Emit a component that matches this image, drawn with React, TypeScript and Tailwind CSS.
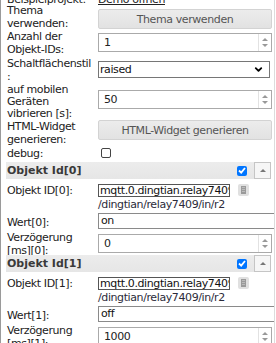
import React from 'react';
import { ChevronDown } from 'lucide-react';

const Spin: React.FC<{ value: string; className?: string }> = ({ value, className = '' }) => (
  <div className={`flex h-[19px] w-[174px] border border-[#aaa] bg-white ${className}`}>
    <span className="flex-1 pl-[5px] leading-[17px] text-[#222]">{value}</span>
    <div className="flex w-[13px] flex-col items-center justify-center gap-[3px] border-l border-[#e2e2e2]">
      <svg width="6" height="3" viewBox="0 0 6 3"><path d="M0 3 L3 0 L6 3 Z" fill="#999" /></svg>
      <svg width="6" height="3" viewBox="0 0 6 3"><path d="M0 0 L3 3 L6 0 Z" fill="#999" /></svg>
    </div>
  </div>
);

const UiButton: React.FC<{ label: string; className?: string }> = ({ label, className = '' }) => (
  <div
    className={`flex h-[20px] w-[174px] items-center justify-center rounded-[2px] border border-[#d3d3d3] bg-[linear-gradient(#ececec,#e2e2e2)] text-[#555] ${className}`}
  >
    {label}
  </div>
);

const Check: React.FC<{ checked?: boolean }> = ({ checked }) =>
  checked ? (
    <div className="flex h-[10px] w-[10px] items-center justify-center rounded-[2px] bg-[#0075ff]">
      <svg width="8" height="7" viewBox="0 0 8 7">
        <path d="M1 3.5 L3.2 5.6 L7 1" stroke="#fff" strokeWidth="1.8" fill="none" />
      </svg>
    </div>
  ) : (
    <div className="h-[10px] w-[10px] rounded-[2px] border border-[#444] bg-white" />
  );

const Header: React.FC<{ title: string }> = ({ title }) => (
  <div className="flex h-[17px] items-stretch">
    <div className="flex w-[248px] items-center justify-between bg-[linear-gradient(#ececec,#e6e6e6)] pl-[1px] pr-[7px]">
      <span className="font-bold tracking-normal text-[#3a3a3a]">{title}</span>
      <Check checked />
    </div>
    <div className="flex w-[17px] items-center justify-center border border-[#c5c5c5] bg-[#f6f6f6]">
      <svg width="6" height="3" viewBox="0 0 6 3"><path d="M0 3 L3 0 L6 3 Z" fill="#777" /></svg>
    </div>
  </div>
);

const Block: React.FC<{ i: number; value: string; delay: string }> = ({ i, value, delay }) => (
  <>
    <Header title={`Objekt Id[${i}]`} />
    <div className="flex h-[19px] items-start">
      <div className="mt-[5px] w-[92px] shrink-0 pl-[1px]">Objekt ID[{i}]:</div>
      <div className="mt-[5px] flex items-start">
        <div className="h-[13px] w-[132px] overflow-hidden whitespace-nowrap border border-[#555] bg-white pl-[1px] leading-[11px] text-[#111]">
          mqtt.0.dingtian.relay7409.in.r2
        </div>
        <div className="ml-[8px] flex h-[12px] w-[11px] items-center justify-center rounded-[2px] bg-[#e0e0e0]">
          <svg width="5" height="8" viewBox="0 0 5 8">
            <rect x="0" y="0" width="5" height="8" fill="#9a9a9a" />
            <rect x="1" y="1" width="3" height="1" fill="#bbb" />
            <rect x="1" y="3" width="3" height="1" fill="#bbb" />
            <rect x="1" y="5" width="3" height="1" fill="#bbb" />
          </svg>
        </div>
      </div>
    </div>
    <div className="flex h-[13px]">
      <div className="w-[92px] shrink-0" />
      <span className="text-[#2b2b3a]">/dingtian/relay7409/in/r2</span>
    </div>
    <div className="flex h-[18px] items-start">
      <div className="mt-[5px] w-[92px] shrink-0 pl-[1px]">Wert[{i}]:</div>
      <div className="mt-[2px] h-[16px] w-[190px] shrink-0 border border-[#8a8a8a] bg-white pl-[2px] leading-[14px] text-[#111]">
        {value}
      </div>
    </div>
    <div className="flex h-[26px] items-start">
      <div className="mt-[3px] w-[92px] shrink-0 pl-[1px] leading-[12.5px]">
        Verzögerung
        <br />
        [ms][{i}]:
      </div>
      <Spin value={delay} className="mt-[5px]" />
    </div>
  </>
);

export default function App() {
  return (
    <div className="h-[343px] w-[276px] overflow-hidden bg-white">
      <div className="-mt-[7px] h-[360px] w-[275px] overflow-hidden border-l border-r border-l-[#9a9a9a] border-r-[#dcdcdc] pl-[5px] font-['DejaVu_Sans',sans-serif] text-[11px] leading-[13px] tracking-[-0.4px] text-[#222]">
        <div className="flex h-[12px] items-start">
          <div className="w-[92px] shrink-0 pl-[1px]">Beispielprojekt:</div>
          <span className="underline">Demo öffnen</span>
        </div>

        <div className="flex h-[25px] items-start">
          <div className="w-[92px] shrink-0 pl-[1px] leading-[12.5px]">
            Thema
            <br />
            verwenden:
          </div>
          <UiButton label="Thema verwenden" className="mt-[4px]" />
        </div>

        <div className="flex h-[27px] items-start">
          <div className="mt-[1px] w-[92px] shrink-0 pl-[1px] leading-[12.5px]">
            Anzahl der
            <br />
            Objekt-IDs:
          </div>
          <Spin value="1" className="mt-[3px] h-[18px]" />
        </div>

        <div className="flex h-[27px] items-start">
          <div className="mt-[1px] w-[92px] shrink-0 pl-[1px] leading-[12.5px]">
            Schaltflächenstil
            <br />:
          </div>
          <div className="mt-[4px] flex h-[17px] w-[172px] items-center justify-between border border-[#767676] bg-white pl-[1px] pr-[5px] text-[#111]">
            <span>raised</span>
            <ChevronDown size={11} strokeWidth={4} color="#000" />
          </div>
        </div>

        <div className="flex h-[36px] items-start">
          <div className="w-[92px] shrink-0 pl-[1px] leading-[12px]">
            auf mobilen
            <br />
            Geräten
            <br />
            vibrieren [s]:
          </div>
          <Spin value="50" className="mt-[6px] h-[18px]" />
        </div>

        <div className="flex h-[26px] items-start">
          <div className="mt-[1px] w-[92px] shrink-0 pl-[1px] leading-[12.5px]">
            HTML-Widget
            <br />
            generieren:
          </div>
          <UiButton label="HTML-Widget generieren" />
        </div>

        <div className="flex h-[16px] items-start">
          <div className="mt-[1px] w-[92px] shrink-0 pl-[1px]">debug:</div>
          <div className="ml-[3px] mt-[2px]">
            <Check />
          </div>
        </div>

        <Block i={0} value="on" delay="0" />
        <Block i={1} value="off" delay="1000" />
      </div>
    </div>
  );
}
